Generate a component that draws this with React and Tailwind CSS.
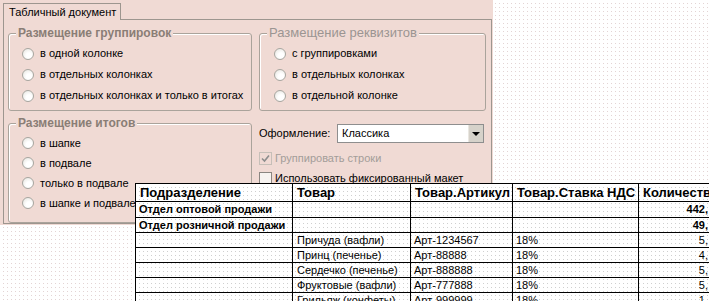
import React from "react"

// crisp 1px dot every 4px: white covers all but one pixel per tile
const pageDots =
  "bg-[#e3d4d4] bg-[linear-gradient(90deg,#fff_3px,transparent_3px),linear-gradient(#fff_3px,transparent_3px)] bg-size-[4px_4px]"
const cellDots =
  "bg-[#cfcfcf] bg-[linear-gradient(90deg,#fff_3px,transparent_3px),linear-gradient(#fff_3px,transparent_3px)] bg-size-[4px_4px]"

function Radio({ label }) {
  return (
    <div className="flex items-center h-full">
      <span className="w-[12px] h-[12px] rounded-full border border-[#a7a6a0] bg-[radial-gradient(circle_at_60%_65%,#ffffff_30%,#e4e2dc_100%)] shrink-0"></span>
      <span className="ml-[6px] text-[11px] text-black whitespace-nowrap">{label}</span>
    </div>
  )
}

function Group({ title, bold, items, height, rowH, pl }) {
  return (
    <div className={`relative border border-[#aaa39b] rounded-[3px] shadow-[inset_1px_1px_0_#fff] ${height}`}>
      <span
        className={`absolute -top-[9px] left-[7px] px-[2px] bg-[#f0dad4] leading-[16px] whitespace-nowrap ${
          bold ? "font-bold text-[12px] text-[#8a7e76]" : "text-[13px] text-[#9b9592]"
        }`}
      >
        {title}
      </span>
      <div className={`pt-[9px] ${pl}`}>
        {items.map((it, i) => (
          <div key={i} className={rowH}>
            <Radio label={it} />
          </div>
        ))}
      </div>
    </div>
  )
}

const rows = [
  { dep: "Отдел оптовой продажи", qty: "442,", bold: true },
  { dep: "Отдел розничной продажи", qty: "49,", bold: true },
  { item: "Причуда (вафли)", art: "Арт-1234567", vat: "18%", qty: "5," },
  { item: "Принц (печенье)", art: "Арт-88888", vat: "18%", qty: "4," },
  { item: "Сердечко (печенье)", art: "Арт-888888", vat: "18%", qty: "5," },
  { item: "Фруктовые (вафли)", art: "Арт-777888", vat: "18%", qty: "5," },
  { item: "Грильяж (конфеты)", art: "Арт-999999", vat: "18%", qty: "1," },
]

const cols = ["w-[157px]", "w-[118px]", "w-[102px]", "w-[126px]"]

export default function App() {
  return (
    <div className={`w-[709px] h-[301px] overflow-hidden ${pageDots} font-['Liberation_Sans',Arial,sans-serif]`}>
      {/* Dialog */}
      <div className="w-[493px] h-[225px] bg-[#f0dad4] pt-[3px] pl-[3px]">
        <div className="relative z-10 w-[118px] h-[17px] border border-b-0 border-[#9d968f] bg-[#f0dad4] pl-[5px] text-[11px] leading-[16px] text-black whitespace-nowrap">
          Табличный документ
        </div>
        <div className="w-[489px] h-[205px] -mt-px border border-[#9d968f] pl-[4px] pt-[13px]">
          <div className="grid grid-cols-[244px_227px] gap-x-[7px] gap-y-[12px]">
            <Group
              title="Размещение группировок"
              bold
              height="h-[78px]"
              rowH="h-[21px]"
              pl="pl-[13px]"
              items={["в одной колонке", "в отдельных колонках", "в отдельных колонках и только в итогах"]}
            />
            <Group
              title="Размещение реквизитов"
              height="h-[78px]"
              rowH="h-[21px]"
              pl="pl-[14px]"
              items={["с группировками", "в отдельных колонках", "в отдельной колонке"]}
            />
            <Group
              title="Размещение итогов"
              bold
              height="h-[100px]"
              rowH="h-[20px]"
              pl="pl-[13px]"
              items={["в шапке", "в подвале", "только в подвале", "в шапке и подвале"]}
            />
            <div className="pt-[1px]">
              <div className="flex items-center h-[19px]">
                <span className="w-[78px] text-[11px] text-black">Оформление:</span>
                <div className="flex w-[147px] h-[19px] border border-[#8e8e8e] bg-white">
                  <span className="flex-1 pl-[4px] text-[11px] leading-[17px] text-black">Классика</span>
                  <span className="w-[15px] h-[17px] bg-[#d6d2ca] border-l border-[#eae7e1] flex items-center justify-center">
                    <span className="w-0 h-0 border-l-[4px] border-r-[4px] border-t-[4px] border-l-transparent border-r-transparent border-t-black"></span>
                  </span>
                </div>
              </div>
              <div className="flex items-center h-[20px] mt-[5px]">
                <span className="w-[13px] h-[13px] border border-[#c6bfb8] flex items-center justify-center">
                  <svg width="9" height="9" viewBox="0 0 9 9">
                    <path d="M1 4.5 L3.5 7 L8 1.5" fill="none" stroke="#8d8d8d" strokeWidth="1.6" />
                  </svg>
                </span>
                <span className="ml-[3px] text-[11px] text-[#a39d99]">Группировать строки</span>
              </div>
              <div className="flex items-center h-[20px]">
                <span className="w-[13px] h-[13px] border border-[#8a8580] bg-[#f7f3f0]"></span>
                <span className="ml-[3px] text-[11px] text-black whitespace-nowrap">Использовать фиксированный макет</span>
              </div>
            </div>
          </div>
        </div>
      </div>

      {/* Table */}
      <div className={`relative z-20 -mt-[42px] ml-[135px] w-[574px] ${cellDots} border-t border-l border-black text-black`}>
        <div className="flex h-[18px] border-b border-black text-[13px] font-bold leading-[17px]">
          {["Подразделение", "Товар", "Товар.Артикул", "Товар.Ставка НДС"].map((h, i) => (
            <div key={i} className={`${cols[i]} shrink-0 border-r border-black pl-[4px] whitespace-nowrap overflow-hidden`}>
              {h}
            </div>
          ))}
          <div className="flex-1 pl-[4px] whitespace-nowrap overflow-hidden">Количество</div>
        </div>
        {rows.map((r, idx) => (
          <div
            key={idx}
            className={`flex border-b border-black text-[11px] ${idx === 0 ? "h-[16px] leading-[15px]" : "h-[15px] leading-[14px]"} ${
              r.bold ? "font-bold" : ""
            }`}
          >
            <div className={`${cols[0]} shrink-0 border-r border-black pl-[3px] whitespace-nowrap overflow-hidden`}>{r.dep || ""}</div>
            <div className={`${cols[1]} shrink-0 border-r border-black pl-[4px] whitespace-nowrap overflow-hidden`}>{r.item || ""}</div>
            <div className={`${cols[2]} shrink-0 border-r border-black pl-[3px] whitespace-nowrap overflow-hidden`}>{r.art || ""}</div>
            <div className={`${cols[3]} shrink-0 border-r border-black pl-[3px] whitespace-nowrap overflow-hidden`}>{r.vat || ""}</div>
            <div className="flex-1 text-right pr-[1px] whitespace-nowrap overflow-hidden">{r.qty}</div>
          </div>
        ))}
      </div>
    </div>
  )
}
